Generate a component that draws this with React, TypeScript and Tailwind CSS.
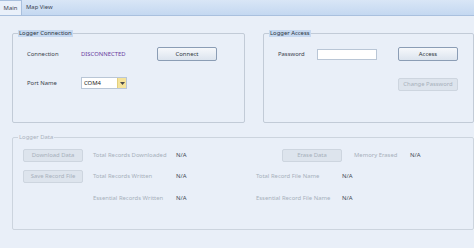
import React from 'react';

const font = { fontFamily: '"Noto Sans", "Open Sans", sans-serif' };

const Btn = ({ label, disabled, w = 'w-[60px]' }: { label: string; disabled?: boolean; w?: string }) => (
  <div
    className={
      disabled
        ? `${w} h-[13px] flex items-center justify-center rounded-[2px] border border-[#cdd5df] bg-[#dde4ed] text-[#a7b0bb]`
        : `${w} h-[14px] flex items-center justify-center rounded-[2px] border border-[#8b9db5] bg-gradient-to-b from-[#f6f8fb] to-[#dce4ee] text-[#2f3640]`
    }
  >
    {label}
  </div>
);

const GroupTitle = ({ title, disabled }: { title: string; disabled?: boolean }) => (
  <div
    className={
      disabled
        ? '-mt-[4px] ml-[5px] w-fit px-[1px] leading-[7px] bg-[#e9eff8] text-[#a9b1bc]'
        : '-mt-[4px] ml-[5px] w-fit px-[1px] leading-[7px] bg-[#c6d9f1] text-[#2b3440]'
    }
  >
    {title}
  </div>
);

export default function App() {
  return (
    <div
      className="w-[474px] h-[248px] overflow-hidden bg-[#e9eff8] text-[5.9px] text-[#3a414b]"
      style={font}
    >
      {/* Tabs */}
      <div className="h-[16px] flex items-end border-b border-[#a9c0de] bg-gradient-to-b from-[#d9e6f6] to-[#c4d8f1]">
        <div className="h-[15px] w-[22px] flex items-center justify-center border-r border-t border-[#a9c0de] bg-[#e9f0fa] text-[#3a4350]">
          Main
        </div>
        <div className="h-[15px] pl-[4px] flex items-center text-[#3a4350]">Map View</div>
      </div>

      <div className="pl-[12px] pt-[17px]">
        <div className="flex gap-[18px]">
          {/* Logger Connection */}
          <div className="w-[233px] h-[90px] border border-[#c2cbd7] rounded-[2px]">
            <GroupTitle title="Logger Connection" />
            <div className="mt-[10px] pl-[14px] flex items-center h-[14px]">
              <div className="w-[54px]">Connection</div>
              <div className="w-[76px] text-[#6a3a9e]">DISCONNECTED</div>
              <Btn label="Connect" />
            </div>
            <div className="mt-[16px] pl-[14px] flex items-center h-[12px]">
              <div className="w-[54px]">Port Name</div>
              <div className="w-[46px] h-[12px] flex border border-[#b9c6d6] bg-white">
                <div className="flex-1 pl-[2px] flex items-center text-[#222]">COM4</div>
                <div className="w-[9px] flex items-center justify-center bg-[#f5e39a] border-l border-[#e2cf7e]">
                  <svg width="5" height="3" viewBox="0 0 5 3">
                    <path d="M0 0 L5 0 L2.5 3 Z" fill="#4a4a4a" />
                  </svg>
                </div>
              </div>
            </div>
          </div>

          {/* Logger Access */}
          <div className="w-[211px] h-[90px] border border-[#c2cbd7] rounded-[2px]">
            <GroupTitle title="Logger Access" />
            <div className="mt-[10px] pl-[14px] flex items-center h-[14px]">
              <div className="w-[39px]">Password</div>
              <div className="w-[60px] h-[11px] border border-[#b9c6d6] bg-white" />
              <div className="w-[21px]" />
              <Btn label="Access" />
            </div>
            <div className="mt-[17px] pl-[134px] flex items-center">
              <Btn label="Change Password" disabled />
            </div>
          </div>
        </div>

        {/* Logger Data */}
        <div className="mt-[14px] w-[462px] h-[93px] border border-[#ccd4de] rounded-[2px]">
          <GroupTitle title="Logger Data" disabled />
          <div className="mt-[7px] pl-[10px] flex items-center h-[14px]">
            <Btn label="Download Data" disabled />
            <div className="w-[10px]" />
            <div className="w-[83px] text-[#a7b0bb]">Total Records Downloaded</div>
            <div className="w-[106px] text-[#444b55]">N/A</div>
            <Btn label="Erase Data" disabled />
            <div className="w-[12px]" />
            <div className="w-[56px] text-[#a7b0bb]">Memory Erased</div>
            <div className="text-[#444b55]">N/A</div>
          </div>
          <div className="mt-[7px] pl-[10px] flex items-center h-[14px]">
            <Btn label="Save Record File" disabled />
            <div className="w-[10px]" />
            <div className="w-[83px] text-[#a7b0bb]">Total Records Written</div>
            <div className="w-[80px] text-[#444b55]">N/A</div>
            <div className="w-[86px] text-[#a7b0bb]">Total Record File Name</div>
            <div className="text-[#444b55]">N/A</div>
          </div>
          <div className="mt-[8px] pl-[10px] flex items-center h-[14px]">
            <div className="w-[60px]" />
            <div className="w-[10px]" />
            <div className="w-[83px] text-[#a7b0bb]">Essential Records Written</div>
            <div className="w-[80px] text-[#444b55]">N/A</div>
            <div className="w-[86px] text-[#a7b0bb]">Essential Record File Name</div>
            <div className="text-[#444b55]">N/A</div>
          </div>
        </div>
      </div>
    </div>
  );
}
